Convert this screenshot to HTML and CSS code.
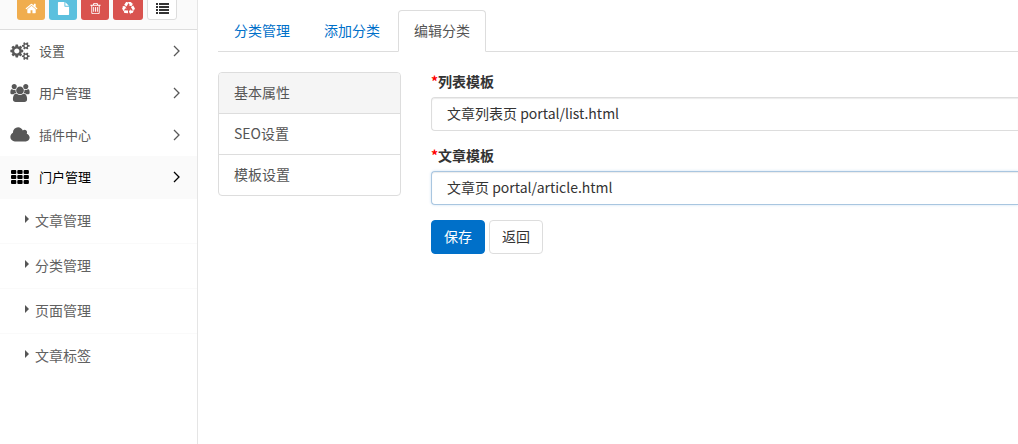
FILE: index.html
```html
<!DOCTYPE html>
<html lang="zh-CN">
<head>
    <meta charset="UTF-8">
    <meta name="viewport" content="width=device-width, initial-scale=1.0">
    <title>编辑分类</title>
    <link rel="stylesheet" href="styles.css">
</head>
<body>
    <aside class="sidebar">
        <div class="shortcuts">
            <button type="button" class="shortcut warning" aria-label="首页">
                <svg class="icon" viewBox="0 0 1792 1792"><path d="M1472 992v480q0 26-19 45t-45 19h-384v-384h-256v384h-384q-26 0-45-19t-19-45v-480q0-1 .5-3t.5-3l575-474 575 474q1 2 1 6zm223-69l-62 74q-8 9-21 11h-3q-13 0-21-7l-692-577-692 577q-12 8-24 7-13-2-21-11l-62-74q-8-10-7-23.5t11-21.5l719-599q32-26 76-26t76 26l244 204v-195q0-14 9-23t23-9h192q14 0 23 9t9 23v408l219 182q10 8 11 21.5t-7 23.5z"/></svg>
            </button>
            <button type="button" class="shortcut info" aria-label="文件">
                <svg class="icon" viewBox="0 0 1792 1792"><path d="M1152 512v-472q22 14 36 28l408 408q14 14 28 36h-472zm-128 32q0 40 28 68t68 28h544v1056q0 40-28 68t-68 28h-1344q-40 0-68-28t-28-68v-1600q0-40 28-68t68-28h800v544z"/></svg>
            </button>
            <button type="button" class="shortcut danger" aria-label="回收站">
                <svg class="icon" viewBox="0 0 1792 1792"><path d="M704 736v576q0 14-9 23t-23 9h-64q-14 0-23-9t-9-23v-576q0-14 9-23t23-9h64q14 0 23 9t9 23zm256 0v576q0 14-9 23t-23 9h-64q-14 0-23-9t-9-23v-576q0-14 9-23t23-9h64q14 0 23 9t9 23zm256 0v576q0 14-9 23t-23 9h-64q-14 0-23-9t-9-23v-576q0-14 9-23t23-9h64q14 0 23 9t9 23zm128 724v-948h-896v948q0 22 7 40.5t14.5 27 10.5 8.5h832q3 0 10.5-8.5t14.5-27 7-40.5zm-672-1076h448l-48-117q-7-9-17-11h-317q-10 2-17 11zm928 32v64q0 14-9 23t-23 9h-96v948q0 83-47 143.5t-113 60.5h-832q-66 0-113-58.5t-47-141.5v-952h-96q-14 0-23-9t-9-23v-64q0-14 9-23t23-9h309l70-167q15-37 54-63t79-26h320q40 0 79 26t54 63l70 167h309q14 0 23 9t9 23z"/></svg>
            </button>
            <button type="button" class="shortcut danger wide" aria-label="清除缓存">
                <svg class="icon" viewBox="0 0 1792 1792"><path d="M836 1169l-15 368-2 22-420-29q-36-3-67-31.5t-47-65.5q-11-27-14.5-55t4-65 12-55 21.5-64 19-53q78 12 509 28zm-387-586l180 379-147-92q-63 72-111.5 144.5t-72.5 125-39.5 94.5-18.5 63l-4 21-190-357q-17-26-18-56t6-47l8-18q35-63 114-188l-140-86zm1231 517l-188 359q-12 29-36.5 46.5t-43.5 20.5l-18 4q-71 7-219 12l8 164-230-367 211-362 7 173q170 16 283 5t170-33zm-785-924q-47 63-265 435l-317-187-19-12 225-356q20-31 60-45t80-10q24 2 48.5 12t42 21 41.5 33 36 34.5 36 39.5 32 35zm655 307l212 363q18 37 12.5 76t-27.5 74q-13 20-33 37t-38 28-48.5 22-47 16-51.5 14-46 12q-34-72-265-436l313-195zm-143-226l142-83-220 373-419-20 151-86q-34-89-75-166t-75.5-123.5-64.5-80-47-46.5l-17-13 405 1q31-3 58 10.5t39 28.5l11 15q39 61 112 190z"/></svg>
            </button>
            <button type="button" class="shortcut plain wide" aria-label="菜单">
                <svg class="icon" viewBox="0 0 13 13"><path d="M0 1h2v2H0zM3 1h10v2H3zM0 4h2v2H0zM3 4h10v2H3zM0 7h2v2H0zM3 7h10v2H3zM0 10h2v2H0zM3 10h10v2H3z"/></svg>
            </button>
        </div>
        <nav>
            <a class="menu-item" href="#">
                <svg class="menu-icon" viewBox="0 0 1920 1792"><path d="M896 896q0-106-75-181t-181-75-181 75-75 181 75 181 181 75 181-75 75-181zm768 512q0-52-38-90t-90-38-90 38-38 90q0 53 37.5 90.5t90.5 37.5 90.5-37.5 37.5-90.5zm0-1024q0-52-38-90t-90-38-90 38-38 90q0 53 37.5 90.5t90.5 37.5 90.5-37.5 37.5-90.5zm-384 421v185q0 10-7 19.5t-16 10.5l-155 24q-11 35-32 76 34 48 90 115 7 11 7 20 0 12-7 19-23 30-82.5 89.5t-78.5 59.5q-11 0-21-7l-115-90q-37 19-77 31-11 108-23 155-7 24-30 24h-186q-11 0-20-7.5t-10-17.5l-23-153q-34-10-75-31l-118 89q-7 7-20 7-11 0-21-8-144-133-144-160 0-9 7-19 10-14 41-53t47-61q-23-44-35-82l-152-24q-10-1-17-9.5t-7-19.5v-185q0-10 7-19.5t16-10.5l155-24q11-35 32-76-34-48-90-115-7-11-7-20 0-12 7-20 22-30 82-89t79-59q11 0 21 7l115 90q34-18 77-32 11-108 23-154 7-24 30-24h186q11 0 20 7.5t10 17.5l23 153q34 10 75 31l118-89q8-7 20-7 11 0 21 8 144 133 144 160 0 8-7 19-12 16-42 54t-45 60q23 48 34 82l152 23q10 2 17 10.5t7 19.5zm640 533v140q0 16-149 31-12 27-30 52 51 113 51 138 0 4-4 7-122 71-124 71-8 0-46-47t-52-68q-20 2-30 2t-30-2q-14 21-52 68t-46 47q-2 0-124-71-4-3-4-7 0-25 51-138-18-25-30-52-149-15-149-31v-140q0-16 149-31 13-29 30-52-51-113-51-138 0-4 4-7 4-2 35-20t59-34 30-16q8 0 46 46.5t52 67.5q20-2 30-2t30 2q51-71 92-112l6-2q4 0 124 70 4 3 4 7 0 25-51 138 17 23 30 52 149 15 149 31zm0-1024v140q0 16-149 31-12 27-30 52 51 113 51 138 0 4-4 7-122 71-124 71-8 0-46-47t-52-68q-20 2-30 2t-30-2q-14 21-52 68t-46 47q-2 0-124-71-4-3-4-7 0-25 51-138-18-25-30-52-149-15-149-31v-140q0-16 149-31 13-29 30-52-51-113-51-138 0-4 4-7 4-2 35-20t59-34 30-16q8 0 46 46.5t52 67.5q20-2 30-2t30 2q51-71 92-112l6-2q4 0 124 70 4 3 4 7 0 25-51 138 17 23 30 52 149 15 149 31z"/></svg>
                <span>设置</span>
                <svg class="arrow" viewBox="0 0 8 12"><path d="M1 1l5 5-5 5"/></svg>
            </a>
            <a class="menu-item" href="#">
                <svg class="menu-icon" viewBox="0 0 1920 1792"><path d="M593 896q-162 5-265 128h-134q-82 0-138-40.5t-56-118.5q0-353 124-353 6 0 43.5 21t97.5 42.5 119 21.5q67 0 133-23-5 37-5 66 0 139 81 256zm1071 637q0 120-73 189.5t-194 69.5h-874q-121 0-194-69.5t-73-189.5q0-53 3.5-103.5t14-109 26.5-108.5 43-97.5 62-81 85.5-53.5 111.5-20q10 0 43 21.5t73 48 107 48 135 21.5 135-21.5 107-48 73-48 43-21.5q61 0 111.5 20t85.5 53.5 62 81 43 97.5 26.5 108.5 14 109 3.5 103.5zm-1024-1277q0 106-75 181t-181 75-181-75-75-181 75-181 181-75 181 75 75 181zm704 384q0 159-112.5 271.5t-271.5 112.5-271.5-112.5-112.5-271.5 112.5-271.5 271.5-112.5 271.5 112.5 112.5 271.5zm576 225q0 78-56 118.5t-138 40.5h-134q-103-123-265-128 81-117 81-256 0-29-5-66 66 23 133 23 59 0 119-21.5t97.5-42.5 43.5-21q124 0 124 353zm-128-609q0 106-75 181t-181 75-181-75-75-181 75-181 181-75 181 75 75 181z"/></svg>
                <span>用户管理</span>
                <svg class="arrow" viewBox="0 0 8 12"><path d="M1 1l5 5-5 5"/></svg>
            </a>
            <a class="menu-item" href="#">
                <svg class="menu-icon" viewBox="64 0 1920 1792"><path d="M1984 1152q0 159-112.5 271.5t-271.5 112.5h-1088q-185 0-316.5-131.5t-131.5-316.5q0-132 71-241.5t187-163.5q-2-28-2-43 0-212 150-362t362-150q158 0 286.5 88t187.5 230q70-62 166-62 106 0 181 75t75 181q0 75-41 138 129 30 213 134.5t84 239.5z"/></svg>
                <span>插件中心</span>
                <svg class="arrow" viewBox="0 0 8 12"><path d="M1 1l5 5-5 5"/></svg>
            </a>
            <a class="menu-item active" href="#">
                <svg class="menu-icon" viewBox="0 0 20 18">
                    <rect x="1" y="2" width="5.300" height="4" rx="1"/>
                    <rect x="7.300" y="2" width="5.300" height="4" rx="1"/>
                    <rect x="13.600" y="2" width="5.300" height="4" rx="1"/>
                    <rect x="1" y="7" width="5.300" height="4" rx="1"/>
                    <rect x="7.300" y="7" width="5.300" height="4" rx="1"/>
                    <rect x="13.600" y="7" width="5.300" height="4" rx="1"/>
                    <rect x="1" y="12" width="5.300" height="4" rx="1"/>
                    <rect x="7.300" y="12" width="5.300" height="4" rx="1"/>
                    <rect x="13.600" y="12" width="5.300" height="4" rx="1"/>
                </svg>
                <span>门户管理</span>
                <svg class="arrow" viewBox="0 0 8 12"><path d="M1 1l5 5-5 5"/></svg>
            </a>
            <div class="submenu">
                <a href="#"><span class="caret"></span>文章管理</a>
                <a href="#"><span class="caret"></span>分类管理</a>
                <a href="#"><span class="caret"></span>页面管理</a>
                <a href="#"><span class="caret"></span>文章标签</a>
            </div>
        </nav>
    </aside>
    <main class="content">
        <nav class="tabs">
            <a href="#">分类管理</a>
            <a href="#">添加分类</a>
            <a class="active" href="#">编辑分类</a>
        </nav>
        <div class="row">
            <div class="list-group">
                <a class="active" href="#">基本属性</a>
                <a href="#">SEO设置</a>
                <a href="#">模板设置</a>
            </div>
            <form>
                <div class="form-group">
                    <label for="list-tpl"><span class="required">*</span>列表模板</label>
                    <select id="list-tpl">
                        <option>文章列表页 portal/list.html</option>
                    </select>
                </div>
                <div class="form-group">
                    <label for="article-tpl"><span class="required">*</span>文章模板</label>
                    <select id="article-tpl" class="focused">
                        <option>文章页 portal/article.html</option>
                    </select>
                </div>
                <div class="actions">
                    <button type="submit" class="btn primary">保存</button>
                    <button type="button" class="btn">返回</button>
                </div>
            </form>
        </div>
    </main>
</body>
</html>
```
FILE: styles.css
```css
* {
    box-sizing: border-box;
}
body {
    display: flex;
    min-height: 100vh;
    margin: 0;
    font-family: "Noto Sans CJK SC", sans-serif;
    font-size: 14px;
    line-height: 20px;
    color: #333;
    background-color: #fff;
}
a {
    text-decoration: none;
}

/* sidebar */
.sidebar {
    flex: 0 0 198px;
    border-right: 1px solid #e5e5e5;
}
.shortcuts {
    display: flex;
    align-items: flex-end;
    gap: 4px;
    height: 30px;
    padding: 0 0 9px 17px;
    overflow: hidden;
    background-color: #fafafa;
    border-bottom: 1px solid #ddd;
}
.shortcut {
    display: flex;
    flex: 0 0 auto;
    align-items: center;
    justify-content: center;
    width: 28px;
    height: 24px;
    padding: 0;
    border: 0;
    border-radius: 3px;
    color: #fff;
}
.shortcut.wide {
    width: 30px;
}
.warning {
    background-color: #f0ad4e;
}
.info {
    background-color: #5bc0de;
}
.danger {
    background-color: #d9534f;
}
.plain {
    background-color: #fff;
    border: 1px solid #ddd;
    color: #333;
}
.icon {
    width: 13px;
    height: 13px;
    fill: currentColor;
}
.menu-item {
    display: flex;
    align-items: center;
    height: 42px;
    padding: 0 16px 0 10px;
    font-size: 13px;
    color: #585858;
}
.menu-icon {
    width: 20px;
    height: 18px;
    margin-right: 9px;
    fill: currentColor;
}
.arrow {
    width: 8px;
    height: 12px;
    margin-left: auto;
    fill: none;
    stroke: currentColor;
    stroke-width: 1.3;
}
.menu-item.active {
    background-color: #fafafa;
    color: #000;
}
.submenu {
    border-top: 1px solid #fafafa;
}
.submenu a {
    display: flex;
    align-items: center;
    height: 45px;
    padding: 0 0 2px 25px;
    border-bottom: 1px solid #fafafa;
    color: #616161;
}
.submenu a:last-child {
    border-bottom-color: transparent;
}
.caret {
    margin: 0 6px 2px 0;
    border-style: solid;
    border-width: 4px 0 4px 4px;
    border-color: transparent transparent transparent #555;
}

/* content */
.content {
    flex: 1;
    min-width: 0;
    padding: 10px 0 0 20px;
}
.tabs {
    display: flex;
    gap: 2px;
    margin-bottom: 20px;
    border-bottom: 1px solid #ddd;
}
.tabs a {
    padding: 9px 15px 11px;
    margin-bottom: -1px;
    border: 1px solid transparent;
    border-radius: 4px 4px 0 0;
    color: #0070c9;
}
.tabs a.active {
    background-color: #fff;
    border-color: #ddd;
    border-bottom-color: #fff;
    color: #555;
}
.row {
    display: grid;
    grid-template-columns: 183px 1fr;
    gap: 30px;
    align-items: start;
}
.list-group {
    border: 1px solid #ddd;
    border-radius: 4px;
    overflow: hidden;
}
.list-group a {
    display: block;
    padding: 9px 15px 11px;
    border-bottom: 1px solid #ddd;
    color: #555;
}
.list-group a:last-child {
    border-bottom: 0;
}
.list-group a.active {
    background-color: #f5f5f5;
}
.form-group {
    margin-bottom: 15px;
}
label {
    display: block;
    margin-bottom: 7px;
    font-weight: bold;
    line-height: 18px;
}
.required {
    color: #f00;
}
select {
    display: block;
    width: 100%;
    height: 34px;
    padding: 0 15px 2px;
    appearance: none;
    border: 1px solid #ddd;
    border-right: 0;
    border-radius: 4px 0 0 4px;
    outline: 0;
    background-color: #fff;
    box-shadow: inset 0 1px 1px rgba(0, 0, 0, 0.08);
    font: inherit;
    color: #333;
}
select.focused {
    border-color: #a9c6e0;
    box-shadow: inset 0 1px 1px rgba(0, 0, 0, 0.08), 0 0 3px rgba(0, 112, 201, 0.2);
}
.actions {
    display: flex;
    gap: 4px;
}
.btn {
    height: 34px;
    padding: 0 12px 2px;
    border: 1px solid #ddd;
    border-radius: 4px;
    background-color: #fff;
    font: inherit;
    color: #333;
}
.btn.primary {
    background-color: #0070c9;
    border-color: #0070c9;
    color: #fff;
}
```
